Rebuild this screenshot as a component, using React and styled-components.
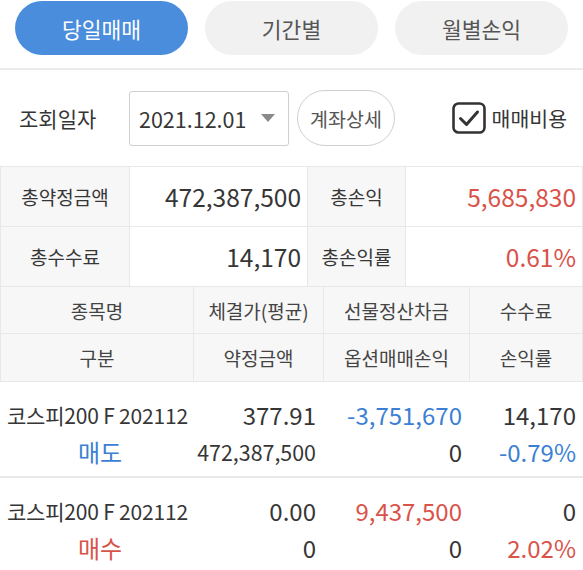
import React from "react";
import styled, { createGlobalStyle } from "styled-components";

const GlobalStyle = createGlobalStyle`
  html, body { margin: 0; padding: 0; background: #fff; }
  body {
    font-family: "Noto Sans CJK KR", "Noto Sans", sans-serif;
    color: #333;
    overflow: hidden;
  }
  * { box-sizing: border-box; }
`;

const RED = "#d9534a";
const BLUE = "#3b7fd4";
const LINE = "#e8e8e8";
const CELL_BG = "#f7f7f7";
const TEXT = "#363636";

const Page = styled.div`
  width: 583px;
  height: 570px;
  overflow: hidden;
  background: #fff;
`;

const TabBar = styled.div`
  display: flex;
  gap: 17px;
  padding: 1px 0 0 15px;
`;

const Tab = styled.div`
  width: 173px;
  height: 54px;
  border-radius: 27px;
  display: flex;
  align-items: center;
  justify-content: center;
  font-size: 21.5px;
  background: ${(p) => (p.$active ? "#4a8ddd" : "#f1f1f1")};
  color: ${(p) => (p.$active ? "#fff" : "#555")};
`;

const TabDivider = styled.div`
  height: 2px;
  margin-top: 13px;
  background: #ebebeb;
`;

const FilterRow = styled.div`
  height: 96px;
  display: flex;
  align-items: center;
  padding: 0 16px 0 19px;
`;

const FilterLabel = styled.span`
  font-size: 21px;
  color: ${TEXT};
  width: 110px;
`;

const DateSelect = styled.div`
  width: 160px;
  height: 55px;
  border: 1px solid #cfcfcf;
  border-radius: 3px;
  display: flex;
  align-items: center;
  justify-content: space-between;
  padding: 0 13px 0 9px;
  font-size: 21.5px;
  color: ${TEXT};
`;

const Caret = styled.span`
  width: 0;
  height: 0;
  border-left: 7px solid transparent;
  border-right: 7px solid transparent;
  border-top: 8px solid #8a8a8a;
`;

const DetailButton = styled.div`
  margin-left: 8px;
  width: 98px;
  height: 56px;
  border: 1px solid #cfcfcf;
  border-radius: 28px;
  display: flex;
  align-items: center;
  justify-content: center;
  font-size: 19.5px;
  color: #555;
`;

const CheckGroup = styled.div`
  margin-left: auto;
  display: flex;
  align-items: center;
  gap: 6px;
  font-size: 20.5px;
  color: ${TEXT};
`;

const SummaryGrid = styled.div`
  display: grid;
  grid-template-columns: 129px 178px 98px 1fr;
  grid-auto-rows: 60px;
  border-top: 1px solid ${LINE};
  border-left: 1px solid ${LINE};
`;

const Cell = styled.div`
  display: flex;
  align-items: center;
  justify-content: ${(p) => (p.$right ? "flex-end" : "center")};
  padding: 0 6px;
  border-right: 1px solid ${LINE};
  border-bottom: 1px solid ${LINE};
  background: ${(p) => (p.$head ? CELL_BG : "#fff")};
  font-size: ${(p) => (p.$head ? "19px" : "24.5px")};
  color: ${(p) => p.$color || TEXT};
`;

const HeaderGrid = styled.div`
  display: grid;
  grid-template-columns: 193px 130px 146px 1fr;
  grid-auto-rows: 47px;
  border-left: 1px solid ${LINE};
  border-bottom: 1px solid ${LINE};
`;

const HeadCell = styled.div`
  display: flex;
  align-items: center;
  justify-content: center;
  background: ${CELL_BG};
  border-right: 1px solid ${LINE};
  border-bottom: ${(p) => (p.$last ? "none" : `1px solid ${LINE}`)};
  font-size: 19px;
  color: #444;
`;

const DataRow = styled.div`
  display: grid;
  grid-template-columns: 193px 130px 146px 1fr;
  grid-auto-rows: 37px;
  height: 96px;
  padding-top: 14px;
  border-bottom: 2px solid ${LINE};
`;

const DataCell = styled.div`
  display: flex;
  align-items: center;
  justify-content: ${(p) => p.$align || "flex-end"};
  padding: ${(p) =>
    p.$align === "flex-start" ? "0 0 0 7px" : p.$align === "center" ? "0 0 0 7px" : "0 7px 0 0"};
  font-size: ${(p) => p.$size || "24px"};
  color: ${(p) => p.$color || TEXT};
  white-space: nowrap;
`;

const NameCell = styled(DataCell)`
  letter-spacing: -0.2px;
`;

function CheckIcon() {
  return (
    <svg width="34" height="32" viewBox="0 0 34 32">
      <rect x="1.5" y="1.5" width="31" height="29" rx="5" fill="#fff" stroke="#333" strokeWidth="2.6" />
      <path d="M8.5 16.5 L14.5 22.5 L25.5 10" fill="none" stroke="#333" strokeWidth="3" strokeLinecap="round" strokeLinejoin="round" />
    </svg>
  );
}

const rows = [
  {
    name: "코스피200 F 202112",
    side: "매도",
    sideColor: BLUE,
    price: "377.91",
    amount: "472,387,500",
    amountSize: "21.4px",
    futures: "-3,751,670",
    futuresColor: BLUE,
    option: "0",
    fee: "14,170",
    rate: "-0.79%",
    rateColor: BLUE,
  },
  {
    name: "코스피200 F 202112",
    side: "매수",
    sideColor: RED,
    price: "0.00",
    amount: "0",
    futures: "9,437,500",
    futuresColor: RED,
    option: "0",
    fee: "0",
    rate: "2.02%",
    rateColor: RED,
  },
];

export default function App() {
  return (
    <Page>
      <GlobalStyle />
      <TabBar>
        <Tab $active>당일매매</Tab>
        <Tab>기간별</Tab>
        <Tab>월별손익</Tab>
      </TabBar>
      <TabDivider />
      <FilterRow>
        <FilterLabel>조회일자</FilterLabel>
        <DateSelect>
          <span>2021.12.01</span>
          <Caret />
        </DateSelect>
        <DetailButton>계좌상세</DetailButton>
        <CheckGroup>
          <CheckIcon />
          <span>매매비용</span>
        </CheckGroup>
      </FilterRow>
      <SummaryGrid>
        <Cell $head>총약정금액</Cell>
        <Cell $right>472,387,500</Cell>
        <Cell $head>총손익</Cell>
        <Cell $right $color={RED}>5,685,830</Cell>
        <Cell $head>총수수료</Cell>
        <Cell $right>14,170</Cell>
        <Cell $head>총손익률</Cell>
        <Cell $right $color={RED}>0.61%</Cell>
      </SummaryGrid>
      <HeaderGrid>
        <HeadCell>종목명</HeadCell>
        <HeadCell>체결가(평균)</HeadCell>
        <HeadCell>선물정산차금</HeadCell>
        <HeadCell>수수료</HeadCell>
        <HeadCell $last>구분</HeadCell>
        <HeadCell $last>약정금액</HeadCell>
        <HeadCell $last>옵션매매손익</HeadCell>
        <HeadCell $last>손익률</HeadCell>
      </HeaderGrid>
      {rows.map((r, i) => (
        <DataRow key={i}>
          <NameCell $align="flex-start" $size="21px">{r.name}</NameCell>
          <DataCell>{r.price}</DataCell>
          <DataCell $color={r.futuresColor}>{r.futures}</DataCell>
          <DataCell>{r.fee}</DataCell>
          <DataCell $align="center" $size="24px" $color={r.sideColor}>{r.side}</DataCell>
          <DataCell $size={r.amountSize}>{r.amount}</DataCell>
          <DataCell>{r.option}</DataCell>
          <DataCell $color={r.rateColor}>{r.rate}</DataCell>
        </DataRow>
      ))}
    </Page>
  );
}
